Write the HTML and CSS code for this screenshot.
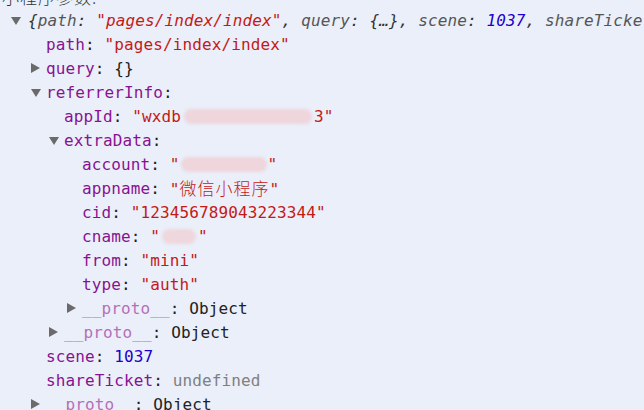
FILE: index.html
```html
<!DOCTYPE html>
<html>
<head>
<meta charset="utf-8">
<link rel="stylesheet" href="styles.css">
</head>
<body>
<div class="console">
  <div class="row cut l0"><span class="cjk plain">小程序参数:</span></div>
  <div class="row l0"><span class="arrow down"></span><span class="preview">{<span class="pk">path</span>: <span class="str">"pages/index/index"</span>, <span class="pk">query</span>: {…}, <span class="pk">scene</span>: <span class="num">1037</span>, <span class="pk">shareTicke</span></span></div>
  <div class="row l1"><span class="key">path</span>: <span class="str">"pages/index/index"</span></div>
  <div class="row l1"><span class="arrow right"></span><span class="key">query</span>: {}</div>
  <div class="row l1"><span class="arrow down"></span><span class="key">referrerInfo</span>:</div>
  <div class="row l2"><span class="key">appId</span>: <span class="str">"wxdb<span class="blob b-app"></span>3"</span></div>
  <div class="row l2"><span class="arrow down"></span><span class="key">extraData</span>:</div>
  <div class="row l3"><span class="key">account</span>: <span class="str">"<span class="blob b-acc"></span>"</span></div>
  <div class="row l3"><span class="key">appname</span>: <span class="str">"<span class="cjk">微信小程序</span>"</span></div>
  <div class="row l3"><span class="key">cid</span>: <span class="str">"123456789043223344"</span></div>
  <div class="row l3"><span class="key">cname</span>: <span class="str">"<span class="blob b-cn"></span>"</span></div>
  <div class="row l3"><span class="key">from</span>: <span class="str">"mini"</span></div>
  <div class="row l3"><span class="key">type</span>: <span class="str">"auth"</span></div>
  <div class="row l3"><span class="arrow right"></span><span class="proto">__proto__</span>: Object</div>
  <div class="row l2"><span class="arrow right"></span><span class="proto">__proto__</span>: Object</div>
  <div class="row l1"><span class="key">scene</span>: <span class="num">1037</span></div>
  <div class="row l1"><span class="key">shareTicket</span>: <span class="undef">undefined</span></div>
  <div class="row l1"><span class="arrow right"></span><span class="proto">__proto__</span>: Object</div>
</div>
</body>
</html>
```
FILE: styles.css
```css
html, body {
  margin: 0;
  padding: 0;
  background: #eaeff9;
  overflow: hidden;
}
.console {
  margin-top: -16px;
  font-family: "DejaVu Sans Mono", "Liberation Mono", "Noto Sans CJK SC", monospace;
  font-size: 16px;
  letter-spacing: 0.12px;
  color: #222222;
  white-space: nowrap;
}
.row {
  height: 24px;
  line-height: 24px;
  display: flex;
  align-items: center;
  white-space: pre;
  padding-top: 1px;
  box-sizing: border-box;
}
.cut { padding-left: 0 !important; }
.l0 { padding-left: 28px; }
.l1 { padding-left: 46px; }
.l2 { padding-left: 64px; }
.l3 { padding-left: 82px; }
.arrow {
  width: 15px;
  margin-left: -15px;
  height: 24px;
  position: relative;
  flex: none;
}
.l0 .arrow { width: 17px; margin-left: -17px; }
.arrow::before {
  content: "";
  position: absolute;
  left: 0;
  top: 8px;
  width: 0;
  height: 0;
}
.arrow.down::before {
  top: 8px;
  border-left: 5px solid transparent;
  border-right: 5px solid transparent;
  border-top: 8px solid #6a6a6a;
}
.arrow.right::before {
  top: 6px;
  border-top: 5px solid transparent;
  border-bottom: 5px solid transparent;
  border-left: 9px solid #6a6a6a;
}
.preview {
  font-style: italic;
  color: #333333;
}
.preview .pk { color: #565656; }
.key { color: #881391; }
.proto { color: #b56fba; }
.str { color: #c41a16; }
.num { color: #1c00cf; }
.undef { color: #808080; }
.cjk {
  font-family: "Noto Sans CJK SC", sans-serif;
  font-size: 17px;
  letter-spacing: 1px;
  font-weight: 300;
}
.plain { color: #333333; padding-left: 2px; }
.blob {
  display: inline-block;
  height: 15px;
  vertical-align: -2px;
  background: #efd5dc;
  border-radius: 8px;
  filter: blur(1.5px);
}
.b-app { width: 128px; margin: 0 2px 0 3px; }
.b-acc { width: 86px; margin: 0 1px; }
.b-cn { width: 34px; margin: 0 2px; background: #eed7dd; border-radius: 10px; }
```
